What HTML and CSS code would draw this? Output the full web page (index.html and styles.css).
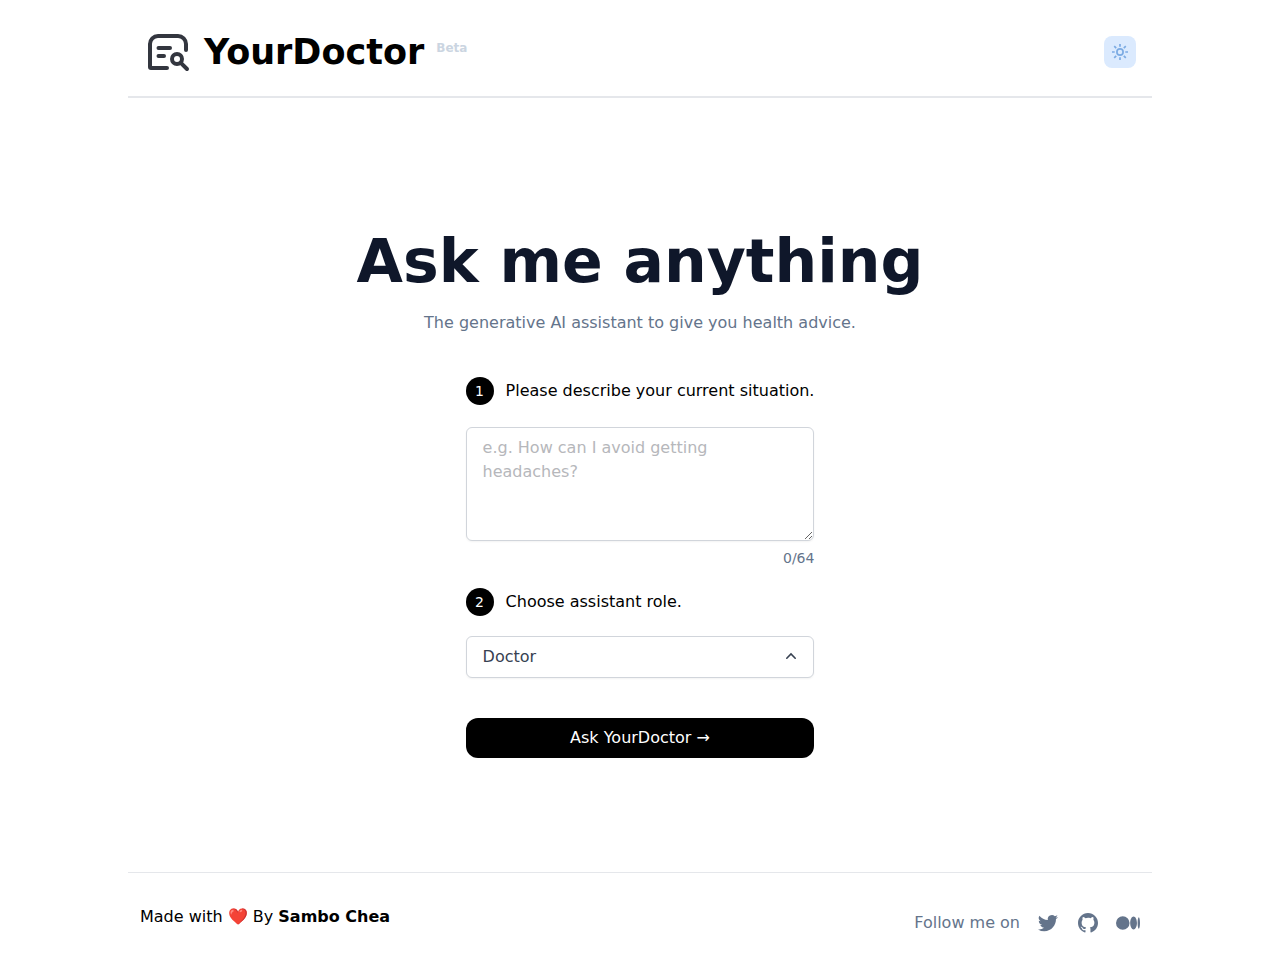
FILE: index.html
```html
<!DOCTYPE html>
<html lang="en">
<head>
<meta charset="utf-8">
<meta name="viewport" content="width=device-width, initial-scale=1">
<title>YourDoctor</title>
<link rel="stylesheet" href="styles.css">
</head>
<body>
<div class="page">
  <header class="header">
    <a class="brand" href="#">
      <svg class="brand-logo" viewBox="0 0 48 48" fill="none" stroke="currentColor" stroke-width="4" stroke-linecap="round" stroke-linejoin="round" aria-hidden="true">
        <path d="M23 40H7a1 1 0 0 1-1-1V16a8 8 0 0 1 8-8h20a8 8 0 0 1 8 8v6"/>
        <path d="M14.5 20H26M14.5 28H20"/>
        <circle cx="33" cy="31" r="5"/>
        <path d="M36.8 34.8 43 41"/>
      </svg>
      <span class="brand-name">YourDoctor</span>
      <span class="brand-tag">Beta</span>
    </a>
    <button class="theme-toggle" type="button" aria-label="Toggle theme">
      <svg viewBox="0 0 16 16" fill="none" stroke="currentColor" stroke-width="1.7" aria-hidden="true">
        <circle cx="8" cy="8" r="3.1"/>
        <path d="M8 0v2.700M8 13.300V16M0 8h2.700M13.300 8H16M2.200 2.200l2 2M11.800 11.800l2 2M13.800 2.200l-2 2M4.200 11.800l-2 2"/>
      </svg>
    </button>
  </header>

  <main class="main">
    <h1 class="title">Ask me anything</h1>
    <p class="subtitle">The generative AI assistant to give you health advice.</p>
    <form class="form">
      <label class="step" for="situation"><span class="step-number">1</span>Please describe your current situation.</label>
      <textarea class="field situation" id="situation" rows="4" maxlength="64" placeholder="e.g. How can I avoid getting headaches?"></textarea>
      <div class="counter">0/64</div>
      <label class="step" for="role"><span class="step-number">2</span>Choose assistant role.</label>
      <div class="role">
        <select class="field role-select" id="role"><option>Doctor</option></select>
        <svg class="role-arrow" viewBox="0 0 20 20" fill="none" stroke="currentColor" stroke-width="1.6" stroke-linecap="round" aria-hidden="true"><path d="M5.800 12.200 10 8l4.200 4.200"/></svg>
      </div>
      <button class="submit" type="button">Ask YourDoctor →</button>
    </form>
  </main>

  <footer class="footer">
    <p class="credit">Made with ❤️ By <a href="#">Sambo Chea</a></p>
    <div class="social">
      <span>Follow me on</span>
      <a href="#" aria-label="Twitter"><svg viewBox="0 0 24 24" aria-hidden="true"><path d="M8.290 20.251c7.547 0 11.675-6.253 11.675-11.675 0-.178 0-.355-.012-.53A8.348 8.348 0 0 0 22 5.920a8.190 8.190 0 0 1-2.357.646 4.118 4.118 0 0 0 1.804-2.270 8.224 8.224 0 0 1-2.605.996 4.107 4.107 0 0 0-6.993 3.743 11.650 11.650 0 0 1-8.457-4.287 4.106 4.106 0 0 0 1.270 5.477A4.072 4.072 0 0 1 2.800 9.713v.052a4.105 4.105 0 0 0 3.292 4.022 4.095 4.095 0 0 1-1.853.070 4.108 4.108 0 0 0 3.834 2.850A8.233 8.233 0 0 1 2 18.407a11.616 11.616 0 0 0 6.290 1.840"/></svg></a>
      <a href="#" aria-label="GitHub"><svg viewBox="0 0 24 24" aria-hidden="true"><path d="M12 2C6.477 2 2 6.463 2 11.970c0 4.404 2.865 8.140 6.839 9.458.5.092.682-.216.682-.480 0-.236-.008-.864-.013-1.695-2.782.602-3.369-1.337-3.369-1.337-.454-1.151-1.110-1.458-1.110-1.458-.908-.618.069-.606.069-.606 1.003.070 1.531 1.027 1.531 1.027.892 1.524 2.341 1.084 2.910.828.092-.643.350-1.083.636-1.332-2.220-.251-4.555-1.107-4.555-4.927 0-1.088.390-1.979 1.029-2.675-.103-.252-.446-1.266.098-2.638 0 0 .840-.268 2.750 1.022A9.607 9.607 0 0 1 12 6.820c.850.004 1.705.114 2.504.336 1.909-1.290 2.747-1.022 2.747-1.022.546 1.372.202 2.386.100 2.638.640.696 1.028 1.587 1.028 2.675 0 3.830-2.339 4.673-4.566 4.920.359.307.678.915.678 1.846 0 1.332-.012 2.407-.012 2.734 0 .267.180.577.688.480C19.137 20.107 22 16.373 22 11.969 22 6.463 17.522 2 12 2z"/></svg></a>
      <a href="#" aria-label="Medium"><svg viewBox="0 0 24 24" aria-hidden="true"><path d="M13.540 12a6.800 6.800 0 0 1-6.770 6.820A6.800 6.800 0 0 1 0 12a6.800 6.800 0 0 1 6.770-6.820A6.800 6.800 0 0 1 13.540 12zM20.960 12c0 3.540-1.510 6.420-3.380 6.420s-3.390-2.880-3.390-6.420 1.520-6.420 3.390-6.420 3.380 2.880 3.380 6.420M24 12c0 3.170-.530 5.750-1.190 5.750s-1.190-2.580-1.190-5.750.530-5.750 1.190-5.750S24 8.830 24 12z"/></svg></a>
    </div>
  </footer>
</div>
</body>
</html>
```
FILE: styles.css
```css
* {
  box-sizing: border-box;
}

body {
  margin: 0;
  background: #fff;
  color: #000;
  font: 16px/24px "DejaVu Sans", sans-serif;
}

h1, p {
  margin: 0;
}

a {
  color: inherit;
  text-decoration: none;
}

svg {
  display: block;
}

button, select, textarea {
  font: inherit;
}

.page {
  display: flex;
  flex-direction: column;
  max-width: 1024px;
  min-height: 100vh;
  margin: 0 auto;
}

.header {
  display: flex;
  align-items: center;
  justify-content: space-between;
  padding: 28px 16px 20px;
  border-bottom: 2px solid #e5e7eb;
}

.brand {
  display: flex;
  align-items: center;
  gap: 12px;
}

.brand-logo {
  width: 48px;
  height: 48px;
  color: #33363f;
}

.brand-name {
  font-size: 35px;
  font-weight: 700;
  line-height: 48px;
}

.brand-tag {
  align-self: flex-start;
  padding-top: 12px;
  color: #cbd5e1;
  font-size: 12px;
  font-weight: 700;
  line-height: 16px;
}

.theme-toggle {
  display: grid;
  place-items: center;
  width: 32px;
  height: 32px;
  padding: 0;
  border: 0;
  border-radius: 8px;
  background: #dbeafe;
  color: #7cabe3;
}

.theme-toggle svg {
  width: 16px;
  height: 16px;
}

.main {
  display: flex;
  flex: 1;
  flex-direction: column;
  align-items: center;
  padding: 133px 16px 64px;
}

.title {
  color: #0f172a;
  font-size: 60px;
  font-weight: 700;
  line-height: 60px;
  text-align: center;
}

.subtitle {
  margin-top: 20px;
  color: #64748b;
  text-align: center;
}

.form {
  display: flex;
  flex-direction: column;
  width: fit-content;
  max-width: 100%;
  margin-top: 42px;
}

.step {
  display: flex;
  align-items: center;
  gap: 12px;
}

.step-number {
  display: grid;
  flex: none;
  place-items: center;
  width: 28px;
  height: 28px;
  border-radius: 50%;
  background: #000;
  color: #fff;
  font-size: 14px;
  line-height: 20px;
}

.field {
  width: 100%;
  border: 1px solid #d1d5db;
  border-radius: 6px;
  background: #fff;
  box-shadow: 0 1px 2px rgb(0 0 0 / 5%);
  color: #374151;
}

.situation {
  display: block;
  margin-top: 22px;
  padding: 8px 16px;
  resize: vertical;
}

.situation::placeholder {
  color: #b6b7bb;
}

.counter {
  margin: 7px 0 20px;
  color: #64748b;
  font-size: 14px;
  line-height: 20px;
  text-align: right;
}

.role {
  position: relative;
  margin-top: 20px;
}

.role-select {
  display: block;
  height: 42px;
  padding: 0 40px 0 16px;
  appearance: none;
}

.role-arrow {
  position: absolute;
  top: 10px;
  right: 13px;
  width: 20px;
  height: 20px;
  color: #374151;
  pointer-events: none;
}

.submit {
  margin-top: 40px;
  padding: 8px 16px;
  border: 0;
  border-radius: 12px;
  background: #000;
  color: #fff;
}

.footer {
  display: flex;
  align-items: flex-start;
  justify-content: space-between;
  padding: 32px 12px 25px;
  border-top: 1px solid #e5e7eb;
}

.credit a {
  font-weight: 700;
}

.social {
  display: flex;
  align-items: center;
  gap: 16px;
  padding-top: 6px;
  color: #64748b;
}

.social svg {
  width: 24px;
  height: 24px;
  fill: currentColor;
}
```
